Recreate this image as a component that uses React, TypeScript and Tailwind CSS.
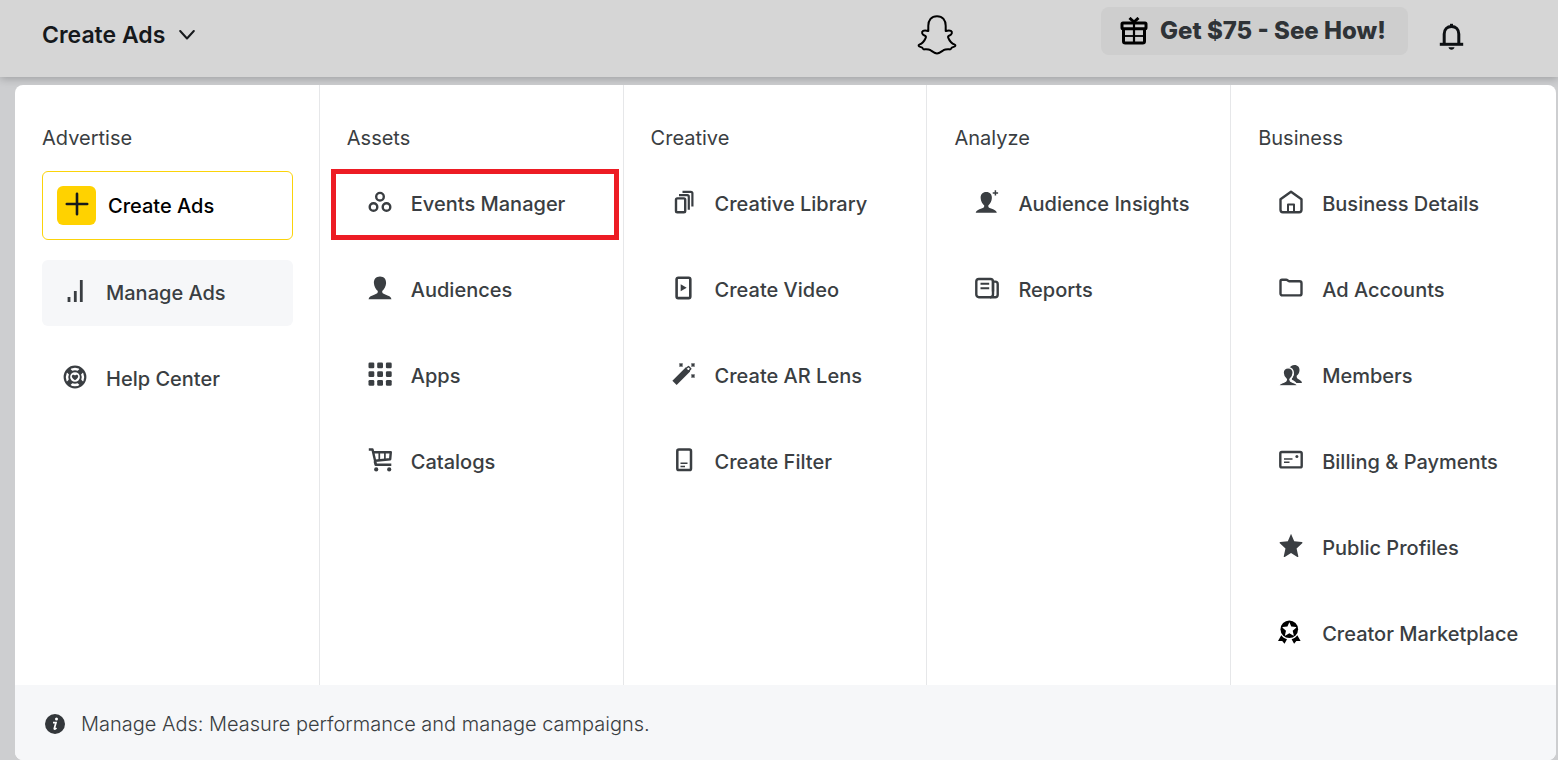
import type { ReactNode } from 'react'

type Item = { label: string; icon: ReactNode; variant?: 'primary' | 'active'; marked?: boolean }
type Column = { title: string; items: Item[] }

function Icon({ children }: { children: ReactNode }) {
  return (
    <svg
      width="26"
      height="26"
      viewBox="0 0 26 26"
      fill="none"
      stroke="currentColor"
      strokeWidth="2.4"
      strokeLinejoin="round"
      aria-hidden="true"
    >
      {children}
    </svg>
  )
}

const person =
  'M13 .5c-4 0-6.3 2.8-6.1 6.6.1 3.2 1.8 6.2 3.9 8 .2 1.9-.7 2.6-3 3.5C4.5 19.8 2 20.8 1.5 23.2h23c-.5-2.4-3-3.4-6.3-4.6-2.3-.9-3.2-1.600-3-3.500 2.100-1.800 3.800-4.800 3.900-8C19.300 3.300 17 .5 13 .5Z'

const starPath =
  'm13 0 3.500 7.900 8.300.8c.8.1 1 .8.500 1.300l-6.200 5.500 1.900 8.100c.1.800-.5 1.100-1.100.8L13 20.200l-6.900 4.200c-.6.300-1.200 0-1.100-.8l1.900-8.100L.7 10c-.5-.5-.3-1.200.5-1.300l8.300-.8Z'

const BarsIcon = (
  <Icon>
    <path d="M7 18v5M13.300 12v11M19.300 1v22" strokeWidth="2.800" />
  </Icon>
)

const HelpIcon = (
  <Icon>
    <circle cx="13" cy="12" r="10.300" strokeWidth="2.200" />
    <circle cx="13" cy="12" r="5.800" strokeWidth="1.900" />
    <path
      d="M6 4.900l3 3M20 4.900l-3 3M6 19.100l3-3M20 19.100l-3-3"
      strokeWidth="5"
    />
    <path
      d="M13 15.200c-2-1.400-3.200-2.600-3.200-3.900 0-1.900 2.300-2.200 3.200-.8.9-1.400 3.200-1.100 3.200.8 0 1.300-1.200 2.500-3.200 3.900Z"
      fill="currentColor"
      stroke="none"
    />
  </Icon>
)

const EventsIcon = (
  <Icon>
    <circle cx="13" cy="6.700" r="3.800" />
    <circle cx="6.500" cy="17" r="3.800" />
    <circle cx="19.500" cy="17" r="3.800" />
  </Icon>
)

const PersonIcon = (
  <Icon>
    <path d={person} fill="currentColor" stroke="none" />
  </Icon>
)

const AppsIcon = (
  <Icon>
    <g fill="currentColor" stroke="none">
      {[0.5, 9.2, 17.9].map((y) =>
        [1.5, 10.2, 18.9].map((x) => (
          <rect key={`${x}-${y}`} x={x} y={y} width="5.800" height="5.800" rx="1.300" />
        ))
      )}
    </g>
  </Icon>
)

const CartIcon = (
  <Icon>
    <path d="M1.800 1.500h3.700L9 16.800M6.300 4.200h17.500l-.6 7-15 1.500M24.300 16.800H8.600l-.9-3.600" />
    <path d="M12.300 4.500v7.500M17.900 4.500v7" strokeWidth="1.700" />
    <g fill="currentColor" stroke="none">
      <circle cx="9.200" cy="21.400" r="2.100" />
      <circle cx="22.200" cy="21.400" r="2.100" />
    </g>
  </Icon>
)

const LibraryIcon = (
  <Icon>
    <rect x="5" y="8.400" width="9.200" height="13.800" rx="1.300" />
    <path d="M8 5.200h8.300c1 0 1.500.5 1.500 1.500v13" strokeWidth="2.200" />
    <path d="M11.500 1.800h8.300c1.100 0 1.600.5 1.600 1.500v13.200" strokeWidth="2.200" />
  </Icon>
)

const VideoIcon = (
  <Icon>
    <rect x="5.600" y="1.700" width="13.700" height="20.400" rx="1.600" strokeWidth="2.600" />
    <path d="M9.700 8.300v7l6-3.500Z" fill="currentColor" stroke="none" />
  </Icon>
)

const WandIcon = (
  <Icon>
    <path d="M3.500 20.800 17 7.300" strokeWidth="6" strokeLinejoin="miter" />
    <path d="m14.800 6.800 2.700-2.300 2.300 2.300-2.300 2.700Z" fill="white" strokeWidth="1.400" />
    <path
      d="m8.500 1.500 3 3m0-3-3 3M20.500 1.500l3 3m0-3-3 3M20.500 12.500l3 3m0-3-3 3"
      strokeWidth="1.700"
    />
  </Icon>
)

const FilterIcon = (
  <Icon>
    <rect x="6.300" y="1.600" width="13.700" height="20.400" rx="1.600" strokeWidth="2.500" />
    <path d="M9.500 15.300h7M9.500 18.400h4.500" strokeWidth="1.500" />
  </Icon>
)

const InsightsIcon = (
  <Icon>
    <g transform="translate(.3 1.500) scale(.92)">
      <path d={person} fill="currentColor" stroke="none" />
    </g>
    <path d="M21.400.2v5.400M18.700 2.900h5.400" strokeWidth="1.500" />
  </Icon>
)

const ReportsIcon = (
  <Icon>
    <rect x="2.300" y="3" width="16.700" height="18.200" rx="2.600" />
    <path d="M19 5.600h2.200c1.600 0 2.500.9 2.500 2.500v10.600c0 1.600-1 2.500-2.500 2.500H16M19 5v10.500" />
    <path d="M6.500 7.700h8.700M6.500 12.300h8.700" strokeWidth="2" />
  </Icon>
)

const HomeIcon = (
  <Icon>
    <path d="M2.500 9.200 13 1.700l10.500 7.500v10.600c0 1.600-.8 2.400-2.400 2.400H4.900c-1.600 0-2.400-.8-2.400-2.400Z" />
    <path d="M10 22v-7.600h6V22" strokeWidth="2" />
  </Icon>
)

const FolderIcon = (
  <Icon>
    <path d="M2.500 5.200c0-1 .5-1.500 1.500-1.500h4.200c1.300 0 1.600 1.500 2.900 1.500h10.400c1.300 0 2 .7 2 2v10.200c0 1.300-.7 2-2 2h-17c-1.300 0-2-.7-2-2Z" />
  </Icon>
)

const MembersIcon = (
  <Icon>
    <path
      d="M11.300 6.300C12.200 4.300 14 3 16.500 3c3.300 0 5.200 2.300 5 5.200-.1 2.300-1.200 4.200-2.800 5.600-.2 2 .3 2.800 2.300 3.800 1.500.8 3 1.800 2.900 3.400h-5.500c-1-1.500-2.500-2.300-3.900-3.100-1-.6-.9-1.200-.3-2 2.900-3.800 2.100-7.600-2.900-9.600Z"
      fill="currentColor"
      stroke="none"
    />
    <g transform="translate(-.5 5.300) scale(.82 .8)">
      <path d={person} fill="currentColor" stroke="white" strokeWidth="1.700" />
    </g>
  </Icon>
)

const CardIcon = (
  <Icon>
    <rect x="2.300" y="4" width="21.400" height="15.400" rx="1.500" strokeWidth="2.400" />
    <path d="M6 11h8.500M6 14.200h5.500" strokeWidth="1.500" />
    <circle cx="18.900" cy="8.600" r="1.500" fill="currentColor" stroke="none" />
  </Icon>
)

const StarIcon = (
  <Icon>
    <g transform="translate(1.200 -.2) scale(.91 .95)">
      <path d={starPath} fill="currentColor" stroke="none" />
    </g>
  </Icon>
)

const BadgeIcon = (
  <Icon>
    <g className="text-black" stroke="none" fill="currentColor">
      <circle cx="11.300" cy="9.200" r="8.800" />
      <path d="M3.300 15.300c1.300 2 3.100 3.200 5.700 3.900l-2.500 4.600-2.300-2.700-4.200-.2ZM19.300 15.300c-1.300 2-3.100 3.200-5.700 3.900l2.500 4.600 2.300-2.700 4.200-.2Z" />
      <g transform="translate(4.200 2.200) scale(.55)">
        <path d={starPath} fill="white" />
      </g>
    </g>
  </Icon>
)

const columns: Column[] = [
  {
    title: 'Advertise',
    items: [
      { label: 'Create Ads', icon: null, variant: 'primary' },
      { label: 'Manage Ads', icon: BarsIcon, variant: 'active' },
      { label: 'Help Center', icon: HelpIcon },
    ],
  },
  {
    title: 'Assets',
    items: [
      { label: 'Events Manager', icon: EventsIcon, marked: true },
      { label: 'Audiences', icon: PersonIcon },
      { label: 'Apps', icon: AppsIcon },
      { label: 'Catalogs', icon: CartIcon },
    ],
  },
  {
    title: 'Creative',
    items: [
      { label: 'Creative Library', icon: LibraryIcon },
      { label: 'Create Video', icon: VideoIcon },
      { label: 'Create AR Lens', icon: WandIcon },
      { label: 'Create Filter', icon: FilterIcon },
    ],
  },
  {
    title: 'Analyze',
    items: [
      { label: 'Audience Insights', icon: InsightsIcon },
      { label: 'Reports', icon: ReportsIcon },
    ],
  },
  {
    title: 'Business',
    items: [
      { label: 'Business Details', icon: HomeIcon },
      { label: 'Ad Accounts', icon: FolderIcon },
      { label: 'Members', icon: MembersIcon },
      { label: 'Billing & Payments', icon: CardIcon },
      { label: 'Public Profiles', icon: StarIcon },
      { label: 'Creator Marketplace', icon: BadgeIcon },
    ],
  },
]

function MenuItem({ item }: { item: Item }) {
  if (item.variant === 'primary') {
    return (
      <a
        href="#"
        className="flex h-[69px] items-center gap-3 rounded-md border border-[#fbd30a] pl-3.5 text-black"
      >
        <span className="flex size-[39px] items-center justify-center rounded-md bg-[#ffd200] pb-1">
          <svg width="24" height="24" viewBox="0 0 24 24" fill="none" stroke="#16191c" strokeWidth="2.600" strokeLinecap="round" aria-hidden="true">
            <path d="M12 1.800v20.400M1.800 12h20.400" />
          </svg>
        </span>
        {item.label}
      </a>
    )
  }
  return (
    <a
      href="#"
      className={`relative flex h-[66px] items-center gap-[18px] whitespace-nowrap rounded-md pl-5 ${
        item.variant === 'active' ? 'bg-[#f6f7f9]' : ''
      }`}
    >
      <span className="mb-0.5 shrink-0">{item.icon}</span>
      {item.label}
      {/* Highlight frame */}
      {item.marked && (
        <span className="absolute -bottom-[3px] -left-4 -right-[22px] -top-0.5 border-[5px] border-[#ed1c24]" />
      )}
    </a>
  )
}

function Header() {
  return (
    <header className="relative flex h-[77px] items-start bg-[#d6d6d6] pl-[42px] pr-[94px] shadow-[0_2px_8px_rgba(0,0,0,0.22)]">
      <button className="mt-5 flex items-center gap-3.5 text-[23px] font-semibold leading-[30px] text-[#16191c]">
        Create Ads
        <svg width="16" height="10" viewBox="0 0 16 10" fill="none" stroke="currentColor" strokeWidth="2" strokeLinecap="round" strokeLinejoin="round" aria-hidden="true">
          <path d="m1.200 1 6.800 7.500L14.800 1" />
        </svg>
      </button>

      {/* Ghost logo */}
      <a href="#" aria-label="Home" className="ml-auto mt-[15px]">
        <svg width="40" height="40" viewBox="0 0 39 40" fill="none" stroke="black" strokeWidth="2" strokeLinejoin="round" aria-hidden="true">
          <path d="M19.500 1.200C13.800 1.200 10.800 5.200 10.800 10.800V16c-1.500-.4-3.500-1-5.200-.1C3.800 17 4.500 19.500 7 20.500c1.300.6 1.800 1 1.300 2.100C7 26 4.500 28.600 1.800 29.600c-1 .4-.8 1.400 0 1.900 1.200.7 2.700.7 3.200 1.500.4 1 .6 1.400 1.500 1.400 2-.1 4.500-.4 6.500.8 2.500 1.800 4 3.200 6.500 3.200s4-1.400 6.500-3.200c2-1.200 4.500-.9 6.500-.8.9 0 1.100-.4 1.500-1.400.5-.8 2-.8 3.200-1.500.8-.5 1-1.500 0-1.900-2.700-1-5.200-3.600-6.500-7-.5-1.100 0-1.500 1.300-2.100 2.500-1 3.200-3.500 1.400-4.600-1.700-.9-3.700-.3-5.200.1v-5.200c0-5.600-3-9.600-8.700-9.600Z" />
        </svg>
      </a>

      <button className="ml-36 mt-[7px] flex h-12 w-[307px] items-center gap-3 whitespace-nowrap rounded-lg bg-[#cecece] pl-[19px] text-2xl font-extrabold text-[#2f3337]">
        <svg width="28" height="28" viewBox="0 0 28 28" fill="none" stroke="black" strokeWidth="3" strokeLinejoin="round" aria-hidden="true">
          <rect x="2" y="6" width="24" height="5.800" rx="1" />
          <path d="M3.500 12v12.300c0 1.200.6 1.800 1.800 1.800h17.400c1.200 0 1.800-.6 1.800-1.800V12" />
          <path d="M9.500 1l4.500 4 4.500-4" strokeWidth="3" />
          <path d="M14 6v20" strokeWidth="2.200" />
          <path d="M4 19h20" strokeWidth="1.800" />
        </svg>
        Get $75 - See How!
      </button>

      <button aria-label="Notifications" className="ml-[31px] mt-[23px]">
        <svg width="25" height="28" viewBox="0 0 25 28" fill="none" stroke="#0d1013" strokeWidth="3" aria-hidden="true">
          <path d="M5.200 21.500V11c0-4.600 3-7.500 7.300-7.500s7.300 2.900 7.300 7.500v10.500" />
          <path d="M.8 21.300h23.400" />
          <path d="M12.500.8v2.500" />
          <path d="M9.500 24.200h6c-.3 1.600-1.300 2.500-3 2.500s-2.700-.9-3-2.500Z" fill="#0d1013" stroke="none" />
        </svg>
      </button>
    </header>
  )
}

export default function App() {
  return (
    <div className="min-h-screen bg-[#cdced0] font-['Inter','Liberation_Sans',sans-serif] text-xl text-[#3a3e42]">
      <Header />
      <main className="relative ml-[15px] mr-0.5 mt-2 overflow-hidden rounded-lg bg-white">
        <nav className="grid grid-cols-5 pr-[22px]">
          {columns.map((column) => (
            <section
              key={column.title}
              className="border-l border-[#e6e7e9] pb-[18px] pl-[27px] pr-[26px] pt-10 first:border-transparent first:pl-[26px]"
            >
              <h2 className="leading-[26px]">{column.title}</h2>
              <ul className="mt-5 flex flex-col gap-5 font-medium">
                {column.items.map((item) => (
                  <li key={item.label}>
                    <MenuItem item={item} />
                  </li>
                ))}
              </ul>
            </section>
          ))}
        </nav>
        <footer className="flex h-[75px] items-center gap-4 bg-[#f6f7f9] pl-[30px] pt-0.5">
          <svg width="20" height="20" viewBox="0 0 20 20" aria-hidden="true">
            <circle cx="10" cy="10" r="10" fill="#33373b" />
            <circle cx="11.500" cy="4.900" r="1.500" fill="white" />
            <path d="M8 8.600h3l-1.700 5.800c-.2 1 .8.900 2.200-.4" fill="none" stroke="white" strokeWidth="1.700" />
          </svg>
          <p className="font-light">Manage Ads: Measure performance and manage campaigns.</p>
        </footer>
      </main>
    </div>
  )
}
